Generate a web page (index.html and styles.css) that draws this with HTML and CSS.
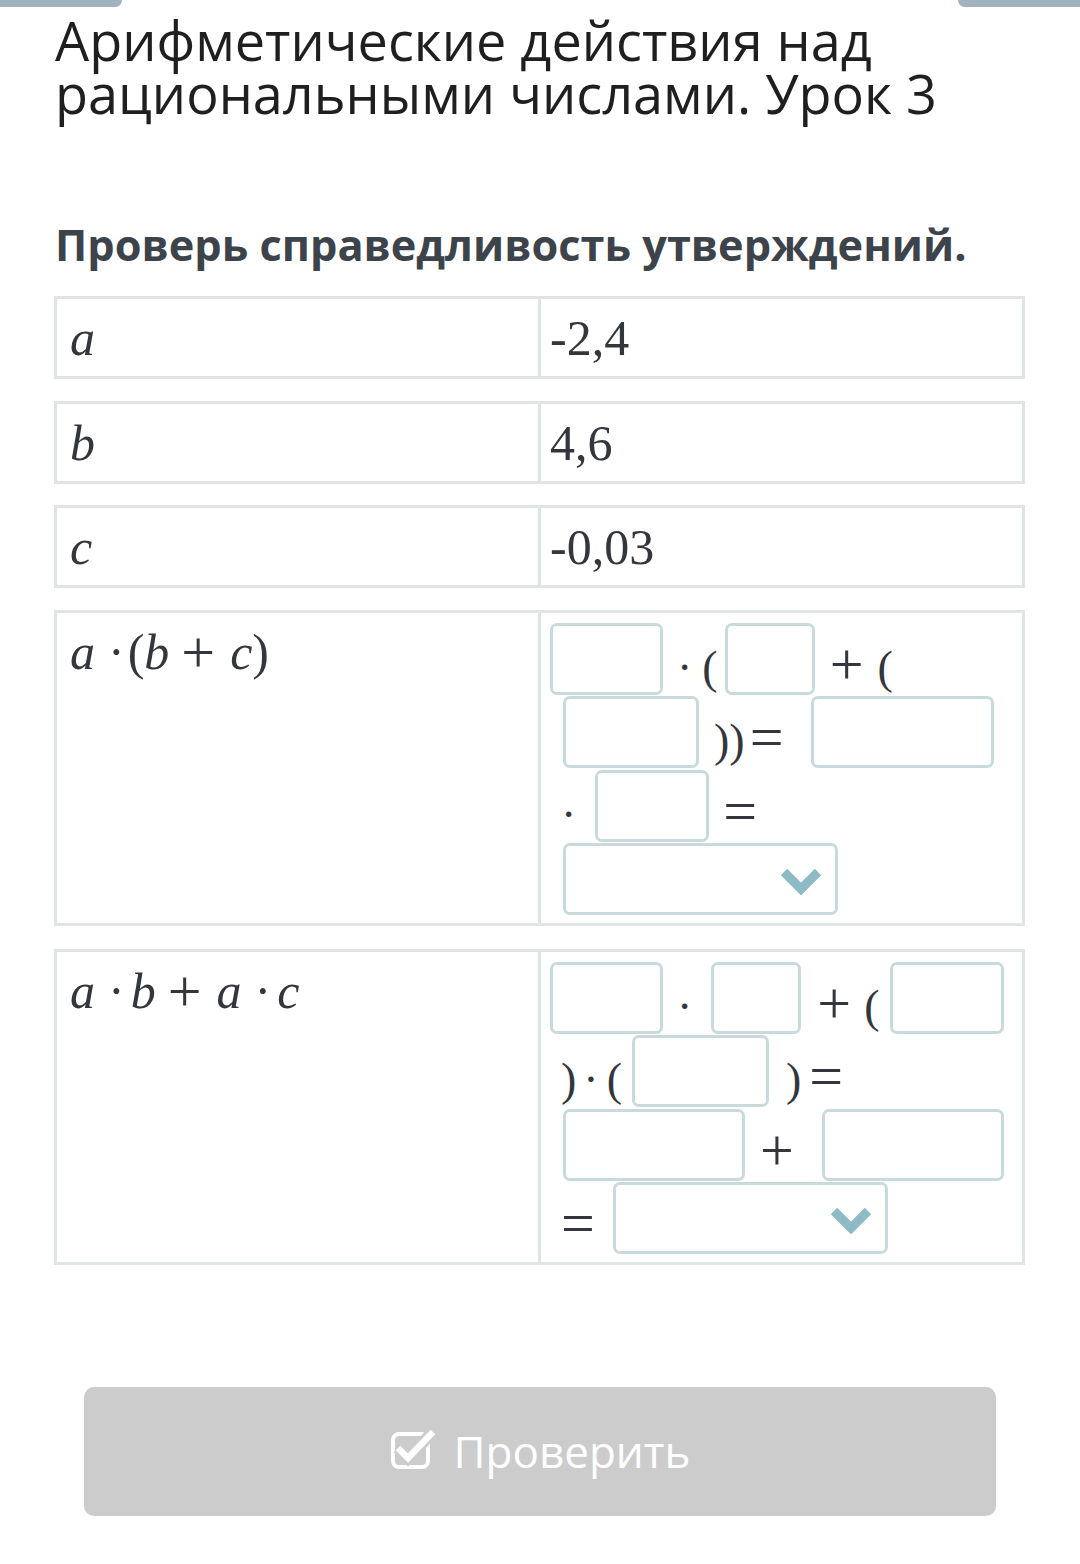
FILE: index.html
```html
<!DOCTYPE html>
<html lang="ru">
<head>
<meta charset="utf-8">
<title>Арифметические действия над рациональными числами. Урок 3</title>
<link rel="stylesheet" href="styles.css">
</head>
<body>
<div class="topbar"><div class="tab tab-left"></div><div class="tab tab-right"></div></div>
<main class="page">
  <h1 class="title">Арифметические действия над<br>рациональными числами. Урок 3</h1>
  <h2 class="task">Проверь справедливость утверждений.</h2>

  <div class="row">
    <div class="cell left"><i>a</i></div>
    <div class="cell right">-2,4</div>
  </div>
  <div class="row">
    <div class="cell left"><i>b</i></div>
    <div class="cell right">4,6</div>
  </div>
  <div class="row">
    <div class="cell left"><i>c</i></div>
    <div class="cell right">-0,03</div>
  </div>

  <div class="row tall">
    <div class="cell left"><i>a</i><span class="dot">·</span><span class="par">(</span><i>b</i><span class="plus">+</span><i>c</i><span>)</span></div>
    <div class="cell right formula">
      <div class="line first">
        <div class="box b113"></div>
        <span class="s ml14">·</span>
        <span class="s ml10">(</span>
        <div class="box b90 ml7"></div>
        <span class="s op ml15">+</span>
        <span class="s ml14">(</span>
      </div>
      <div class="line">
        <div class="box b136"></div>
        <span class="s ml15">))</span>
        <span class="s op ml5">=</span>
        <div class="box b183 ml28"></div>
      </div>
      <div class="line">
        <span class="s mln2">·</span>
        <div class="box b114 ml19"></div>
        <span class="s op ml14">=</span>
      </div>
      <div class="line">
        <div class="select"><svg class="chev" width="42" height="28" viewBox="0 0 42 28"><polyline points="4,5 21,22 38,5" fill="none" stroke="#8dbac4" stroke-width="9"/></svg></div>
      </div>
    </div>
  </div>

  <div class="row tall">
    <div class="cell left"><i>a</i><span class="dot">·</span><i>b</i><span class="plus">+</span><i>a</i><span class="dot">·</span><i>c</i></div>
    <div class="cell right formula">
      <div class="line first">
        <div class="box b113"></div>
        <span class="s ml14">·</span>
        <div class="box b90 ml19"></div>
        <span class="s op ml16">+</span>
        <span class="s ml13">(</span>
        <div class="box b114 ml10"></div>
      </div>
      <div class="line">
        <span class="s mln2">)</span>
        <span class="s ml7">·</span>
        <span class="s ml8">(</span>
        <div class="box b137 ml10"></div>
        <span class="s ml17">)</span>
        <span class="s op ml8">=</span>
      </div>
      <div class="line">
        <div class="box b182"></div>
        <span class="s op ml15">+</span>
        <div class="box b182 ml28"></div>
      </div>
      <div class="line">
        <span class="s op mln2">=</span>
        <div class="select ml18"><svg class="chev" width="42" height="28" viewBox="0 0 42 28"><polyline points="4,5 21,22 38,5" fill="none" stroke="#8dbac4" stroke-width="9"/></svg></div>
      </div>
    </div>
  </div>

  <div class="actions">
    <button class="check" type="button">
      <svg class="check-icon" width="48" height="42" viewBox="0 0 48 42"><rect x="3" y="6" width="35" height="33" rx="6" fill="none" stroke="#fff" stroke-width="4"/><polyline points="8,20 18,30 43,4" fill="none" stroke="#cccccc" stroke-width="12"/><polyline points="8,20 18,30 43,4" fill="none" stroke="#fff" stroke-width="6.5"/></svg>
      <span>Проверить</span>
    </button>
  </div>
</main>
</body>
</html>
```
FILE: styles.css
```css
* { box-sizing: border-box; }
html, body { margin: 0; padding: 0; background: #fff; }
body { font-family: "Open Sans", "Liberation Sans", sans-serif; color: #222; width: 1080px; }

.topbar { display: flex; justify-content: space-between; height: 7px; }
.tab { width: 122px; height: 7px; background: #a2b3c0; }
.tab-left { border-bottom-right-radius: 8px; }
.tab-right { border-bottom-left-radius: 8px; }

.page { padding: 0 55px 0 54px; }

.title {
  margin: 0; padding-top: 7px; padding-left: 1px;
  font-size: 54px; font-weight: 400; line-height: 53px; color: #1f1f1f;
}
.task {
  margin: 100px 0 26px 1px;
  font-size: 43.3px; font-weight: 700; line-height: 50px; color: #3d434a;
}

.row {
  display: grid;
  grid-template-columns: 484px 1fr;
  border: 3px solid #dfe4e4;
  height: 83px;
  margin-bottom: 21.5px;
  font-family: "Liberation Serif", "DejaVu Serif", serif;
  font-size: 50px;
  color: #33373d;
}
.row.tall { height: 316px; margin-bottom: 23px; }
.cell { line-height: 56px; padding-top: 11px; }
.cell.left { border-right: 3px solid #dfe4e4; padding-left: 13px; }
.cell.right { padding-left: 9px; }
.dot { margin: 0 6px 0 13px; }
.par { margin-left: -3px; }
.plus { font-size: 60px; margin: 0 15px 0 12px; vertical-align: -3px; }

.formula { padding-top: 10px; display: flex; flex-direction: column; gap: 1.5px; }
.line { display: flex; align-items: flex-end; height: 72px; padding-left: 13px; }
.line.first { padding-left: 0; }

.box {
  height: 72px; flex: none;
  border: 3px solid #c9dadc; border-radius: 7px; background: #fff;
}
.b90 { width: 90px; }
.b113 { width: 113px; }
.b114 { width: 114px; }
.b136 { width: 136px; }
.b137 { width: 137px; }
.b182 { width: 182px; }
.b183 { width: 183px; }

.select {
  width: 275px; height: 72px; flex: none;
  border: 3px solid #c9dadc; border-radius: 7px;
  display: flex; align-items: center; justify-content: flex-end; padding-right: 13px;
}
.chev { display: block; margin-top: 4px; }

.s { font-size: 46px; line-height: 46px; padding-bottom: 4px; flex: none; white-space: pre; }
.s.op { font-size: 60px; line-height: 60px; padding-bottom: 1px; }

.ml5 { margin-left: 5px; }
.ml7 { margin-left: 7px; }
.ml8 { margin-left: 8px; }
.ml10 { margin-left: 10px; }
.ml12 { margin-left: 12px; }
.ml13 { margin-left: 13px; }
.ml14 { margin-left: 14px; }
.ml15 { margin-left: 15px; }
.ml16 { margin-left: 16px; }
.ml17 { margin-left: 17px; }
.ml18 { margin-left: 18px; }
.ml19 { margin-left: 19px; }
.ml23 { margin-left: 23px; }
.ml28 { margin-left: 28px; }
.mln2 { margin-left: -2px; }

.actions { padding: 99px 29px 0 30px; }
.check {
  width: 100%; height: 129px;
  border: 0; border-radius: 10px; background: #cccccc;
  display: flex; align-items: center; justify-content: center; gap: 16px;
  font-family: "Open Sans", "Liberation Sans", sans-serif;
  font-size: 44px; color: #fff; padding: 0;
}
.check-icon { display: block; margin-top: -4px; }
```
